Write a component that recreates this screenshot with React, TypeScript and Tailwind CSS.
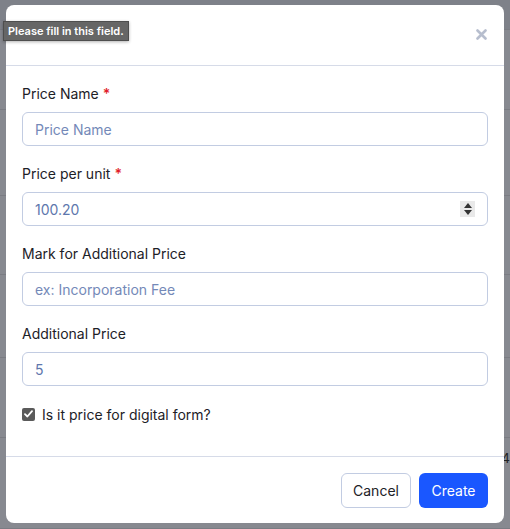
import React from "react";

const font = { fontFamily: "Inter, 'Noto Sans', 'Liberation Sans', sans-serif" };

function Label({ text, required }: { text: string; required?: boolean }) {
  return (
    <div className="h-5 leading-5 text-[14px] font-normal text-[#1d2127] mb-2">
      {text}
      {required && <span className="text-[#e11d2a] ml-1 font-semibold">*</span>}
    </div>
  );
}

function Field({
  label,
  required,
  placeholder,
  value,
  spinner,
}: {
  label: string;
  required?: boolean;
  placeholder?: string;
  value?: string;
  spinner?: boolean;
}) {
  return (
    <div className="mb-[18px]">
      <Label text={label} required={required} />
      <div className="relative">
        <input
          readOnly
          value={value ?? ""}
          placeholder={placeholder}
          className="w-full h-[34px] rounded-[6px] border border-[#c2cce2] bg-white px-3 text-[14px] text-[#5e77ad] placeholder:text-[#7489b8] outline-none"
          style={font}
        />
        {spinner && (
          <div className="absolute right-[13px] top-[9px] w-[15px] h-[16px] bg-[#e9e9e9] flex flex-col items-center justify-center gap-[2px]">
            <svg width="8" height="5" viewBox="0 0 8 5">
              <path d="M4 0 L8 5 L0 5 Z" fill="#333" />
            </svg>
            <svg width="8" height="5" viewBox="0 0 8 5">
              <path d="M0 0 L8 0 L4 5 Z" fill="#333" />
            </svg>
          </div>
        )}
      </div>
    </div>
  );
}

export default function App() {
  const rows = [30, 80, 86, 79, 83, 80, 91];
  return (
    <div className="relative w-[510px] h-[529px] bg-[#878990] overflow-hidden" style={font}>
      {/* page behind the dialog */}
      <div className="flex flex-col">
        {rows.map((h, i) => (
          <div
            key={i}
            className={i === 0 ? "bg-[#7e8189] border-b border-[#7a7c83]" : "border-b border-[#7a7c83] flex justify-end items-end"}
            style={{ height: h }}
          >
            {i === 5 && <span className="text-[13px] text-[#222] leading-none mb-[-28px]">4</span>}
          </div>
        ))}
      </div>

      {/* dialog overlay */}
      <div className="absolute left-[6px] top-[5px] w-[498px] h-[518px] bg-white rounded-[8px] flex flex-col">
        <div className="h-[61px] border-b border-[#d6dbe8] flex items-center justify-end pr-[17px]">
          <svg width="11" height="11" viewBox="0 0 11 11" className="mt-[-1px]">
            <path d="M1.5 1.5 L9.5 9.5 M9.5 1.5 L1.5 9.5" stroke="#b7bece" strokeWidth="2.6" strokeLinecap="round" />
          </svg>
        </div>

        <div className="px-4 pt-[18px] flex-1">
          <Field label="Price Name" required placeholder="Price Name" />
          <Field label="Price per unit" required value="100.20" spinner />
          <Field label="Mark for Additional Price" placeholder="ex: Incorporation Fee" />
          <Field label="Additional Price" value="5" />
          <div className="flex items-center h-5 gap-[7px]">
            <div className="w-[13px] h-[13px] rounded-[2px] bg-[#5a5a5a] flex items-center justify-center">
              <svg width="9" height="8" viewBox="0 0 9 8">
                <path d="M1 4.2 L3.4 6.5 L8 1.2" stroke="white" strokeWidth="1.8" fill="none" strokeLinecap="round" strokeLinejoin="round" />
              </svg>
            </div>
            <span className="text-[14px] font-normal text-[#1d2127]">Is it price for digital form?</span>
          </div>
        </div>

        <div className="border-t border-[#d6dbe8] pt-4 pb-[15px] px-4 flex justify-end gap-2">
          <button className="h-[35px] w-[70px] rounded-[6px] border border-[#c2cce2] bg-white text-[14px] text-[#1d2127] font-normal">
            Cancel
          </button>
          <button className="h-[35px] w-[69px] rounded-[6px] bg-[#1a57ff] text-[14px] text-white font-normal">
            Create
          </button>
        </div>
      </div>

      {/* validation tooltip */}
      <div className="absolute left-[3px] top-[21px] h-[20px] px-[4px] flex items-center bg-[#666666] border border-[#4e4e4e] shadow-[0_1px_3px_rgba(0,0,0,0.3)] text-[11px] font-semibold text-white whitespace-nowrap">
        Please fill in this field.
      </div>
    </div>
  );
}
